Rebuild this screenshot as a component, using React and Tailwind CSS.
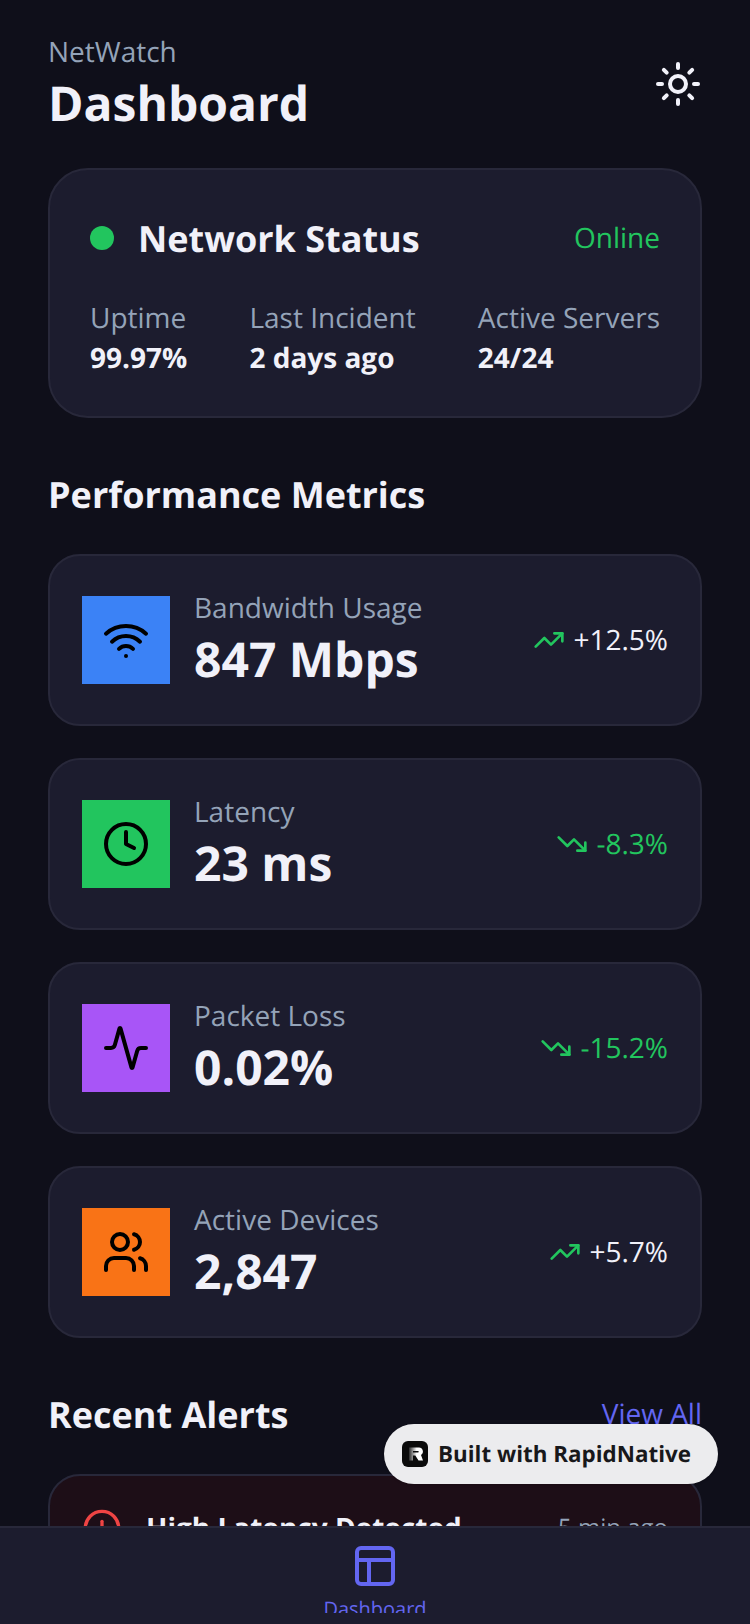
import React from "react";
import { Sun, Wifi, Clock, Activity, Users, TrendingUp, TrendingDown, CircleAlert, PanelsTopLeft } from "lucide-react";

const metrics = [
  { label: "Bandwidth Usage", value: "847 Mbps", delta: "+12.5%", up: true, Icon: Wifi, bg: "bg-[#3b82f6]", color: "text-[#f1f1f9]" },
  { label: "Latency", value: "23 ms", delta: "-8.3%", up: false, Icon: Clock, bg: "bg-[#22c55e]", color: "text-[#22c55e]" },
  { label: "Packet Loss", value: "0.02%", delta: "-15.2%", up: false, Icon: Activity, bg: "bg-[#a855f7]", color: "text-[#22c55e]" },
  { label: "Active Devices", value: "2,847", delta: "+5.7%", up: true, Icon: Users, bg: "bg-[#f97316]", color: "text-[#f1f1f9]" },
];

function Stat({ label, value }) {
  return (
    <div className="flex flex-col">
      <span className="text-[28px] leading-[40px] text-[#94a3b8]">{label}</span>
      <span className="text-[28px] leading-[40px] font-bold text-[#f1f1f9]">{value}</span>
    </div>
  );
}

function Metric({ label, value, delta, up, Icon, bg, color }) {
  const Trend = up ? TrendingUp : TrendingDown;
  return (
    <div className="flex items-center justify-between rounded-[32px] border-2 border-[#28283a] bg-[#1c1c2e] px-8 py-8">
      <div className="flex items-center gap-6">
        <div className={`flex h-[88px] w-[88px] items-center justify-center ${bg}`}>
          <Icon size={48} strokeWidth={2} color="#000000" />
        </div>
        <div className="flex flex-col">
          <span className="text-[28px] leading-[40px] text-[#94a3b8]">{label}</span>
          <span className="text-[48px] leading-[64px] font-bold text-[#f1f1f9]">{value}</span>
        </div>
      </div>
      <div className="flex items-center gap-2">
        <Trend size={32} strokeWidth={2} color="#22c55e" />
        <span className={`text-[28px] leading-[40px] ${color}`}>{delta}</span>
      </div>
    </div>
  );
}

export default function App() {
  return (
    <div className="relative flex h-[1624px] w-[750px] flex-col overflow-hidden bg-[#0f0f1a] font-['Open_Sans',sans-serif] [text-rendering:geometricPrecision]">
      <main className="min-h-0 flex-1 overflow-hidden px-12 pt-8">
        <header className="mb-8 flex items-center justify-between">
          <div className="flex flex-col">
            <span className="text-[28px] leading-[40px] text-[#94a3b8]">NetWatch</span>
            <h1 className="text-[48px] leading-[64px] font-bold text-[#f1f1f9]">Dashboard</h1>
          </div>
          <Sun size={48} strokeWidth={2} color="#f1f1f9" />
        </header>

        <section className="mb-12 rounded-[40px] border-2 border-[#28283a] bg-[#1c1c2e] px-10 pt-10 pb-[38px]">
          <div className="mb-8 flex h-14 items-center justify-between">
            <div className="flex items-center gap-6">
              <span className="h-6 w-6 rounded-full bg-[#22c55e]" />
              <span className="pt-[2px] text-[36px] leading-[56px] font-bold text-[#f1f1f9]">Network Status</span>
            </div>
            <span className="text-[28px] leading-[40px] text-[#22c55e]">Online</span>
          </div>
          <div className="flex justify-between">
            <Stat label="Uptime" value="99.97%" />
            <Stat label="Last Incident" value="2 days ago" />
            <Stat label="Active Servers" value="24/24" />
          </div>
        </section>

        <h2 className="mb-[31px] pt-px text-[36px] leading-[56px] font-bold text-[#f1f1f9]">Performance Metrics</h2>
        <div className="mb-12 flex flex-col gap-8">
          {metrics.map((m) => (
            <Metric key={m.label} {...m} />
          ))}
        </div>

        <div className="mb-8 flex h-14 items-center justify-between">
          <h2 className="pt-[2px] text-[36px] leading-[56px] font-bold text-[#f1f1f9]">Recent Alerts</h2>
          <span className="text-[28px] leading-[40px] text-[#6366f1]">View All</span>
        </div>
        <div className="rounded-[32px] border-2 border-[#28283a] bg-[#1d0e17] px-8 py-8">
          <div className="flex items-center justify-between">
            <div className="flex items-center gap-6">
              <CircleAlert size={40} strokeWidth={2} color="#ef4444" />
              <span className="text-[28px] leading-[40px] font-bold text-[#f1f1f9]">High Latency Detected</span>
            </div>
            <span className="text-[24px] leading-[32px] text-[#94a3b8]">5 min ago</span>
          </div>
        </div>
      </main>

      <nav className="h-[98px] shrink-0 border-t-2 border-[#28283a] bg-[#1c1c2e] pt-[14px]">
        <div className="flex h-[71px] flex-col items-center overflow-hidden">
          <PanelsTopLeft size={48} strokeWidth={2} color="#6366f1" className="shrink-0" />
          <span className="mt-1 text-[20px] leading-[30px] text-[#6366f1]">Dashboard</span>
        </div>
      </nav>

      <div className="absolute left-[384px] top-[1424px] flex h-[60px] w-[334px] items-center gap-[10px] rounded-full bg-[#ececee] pl-[18px] shadow-sm">
        <svg width="26" height="26" viewBox="0 0 26 26">
          <defs>
            <linearGradient id="rn" x1="0" y1="0" x2="1" y2="0">
              <stop offset="0" stopColor="#2a2a2a" />
              <stop offset="0.55" stopColor="#ffffff" />
            </linearGradient>
          </defs>
          <rect width="26" height="26" rx="6" fill="#0b0b0b" />
          <path fillRule="evenodd" d="M7 6.5h10a4 4 0 0 1 2 7.4l2 5.6h-4.5l-3.2-5H11v5H7zM11 10v1.5h5a.75.75 0 0 0 0-1.5z" fill="url(#rn)" />
        </svg>
        <span className="text-[22.4px] leading-[30px] font-bold text-[#18181b]">Built with RapidNative</span>
      </div>
    </div>
  );
}
